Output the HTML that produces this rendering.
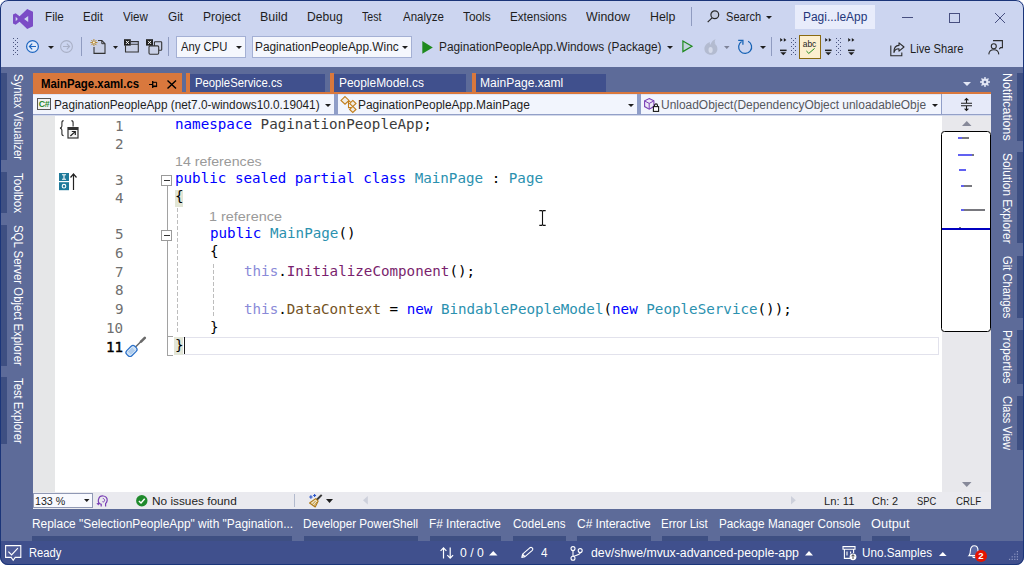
<!DOCTYPE html>
<html lang="en">
<head>
<meta charset="utf-8">
<title>MainPage.xaml.cs - PaginationPeopleApp - Microsoft Visual Studio</title>
<style>
*{box-sizing:border-box;margin:0;padding:0}
html,body{width:1024px;height:565px;overflow:hidden;background:#fff}
body{position:relative;font-family:"Liberation Sans",sans-serif;font-size:12px;color:#1e1e1e}
#win{position:absolute;left:0;top:0;width:1024px;height:565px;background:#5d6b99;border-radius:8px;overflow:hidden}
#win:after{content:"";position:absolute;left:0;top:0;right:0;bottom:0;border:1px solid #1b3579;border-radius:8px;pointer-events:none}
.a{position:absolute}
.t{position:absolute;white-space:nowrap;line-height:16px;height:16px;transform-origin:0 50%}
.vt{position:absolute;white-space:nowrap;line-height:16px;height:16px;transform-origin:0 0}
.c{position:absolute;white-space:pre;font-family:"DejaVu Sans Mono","Liberation Mono",monospace;line-height:18px;height:18px;color:#000;transform-origin:0 50%}
.kw{color:#0000ff}.ty{color:#2b91af}.th{color:#8a8ad8}.mt{color:#74531f}.pr{color:#7a1f6e}.ns{color:#3c3c3c}
svg{position:absolute;overflow:visible}
</style>
</head>
<body>
<div id="win">
<!-- title / menu bar / toolbar -->
<div class="a" style="left:0px;top:0px;width:1024px;height:67px;background:#ccd5f0;"></div>
<svg style="left:13px;top:9px" width="20" height="20" viewBox="0 0 20 20"><path fill="#7b4cc6" fill-rule="evenodd" d="M14.2 0 L20 2.8 V17.2 L14.2 20 L6.6 12.7 L2.6 15.7 L0 14.4 V5.6 L2.6 4.3 L6.6 7.3 Z M2.7 7.7 V12.3 L4.9 10 Z M15.2 6.9 L11.1 10 L15.2 13.1 Z"/></svg>
<div class="t" style="left:44.57px;top:9.00px;font-size:12px;color:#1e1e1e;transform:scaleX(0.9722);">File</div>
<div class="t" style="left:82.58px;top:9.00px;font-size:12px;color:#1e1e1e;transform:scaleX(0.9596);">Edit</div>
<div class="t" style="left:123.00px;top:9.00px;font-size:12px;color:#1e1e1e;transform:scaleX(0.9645);">View</div>
<div class="t" style="left:167.91px;top:9.00px;font-size:12px;color:#1e1e1e;transform:scaleX(0.9824);">Git</div>
<div class="t" style="left:202.54px;top:9.00px;font-size:12px;color:#1e1e1e;transform:scaleX(1.0039);">Project</div>
<div class="t" style="left:259.50px;top:9.00px;font-size:12px;color:#1e1e1e;transform:scaleX(1.0367);">Build</div>
<div class="t" style="left:306.53px;top:9.00px;font-size:12px;color:#1e1e1e;transform:scaleX(1.0083);">Debug</div>
<div class="t" style="left:362.29px;top:9.00px;font-size:12px;color:#1e1e1e;transform:scaleX(0.8837);">Test</div>
<div class="t" style="left:402.50px;top:9.00px;font-size:12px;color:#1e1e1e;transform:scaleX(0.9588);">Analyze</div>
<div class="t" style="left:462.76px;top:9.00px;font-size:12px;color:#1e1e1e;transform:scaleX(0.9868);">Tools</div>
<div class="t" style="left:509.57px;top:9.00px;font-size:12px;color:#1e1e1e;transform:scaleX(0.9676);">Extensions</div>
<div class="t" style="left:586.00px;top:9.00px;font-size:12px;color:#1e1e1e;transform:scaleX(1.0300);">Window</div>
<div class="t" style="left:649.51px;top:9.00px;font-size:12px;color:#1e1e1e;transform:scaleX(1.0309);">Help</div>
<div class="a" style="left:691px;top:7px;width:1px;height:19px;background:#8f9bc0;"></div>
<svg style="left:707px;top:10px" width="13" height="13" viewBox="0 0 13 13"><circle cx="7.8" cy="4.8" r="3.9" fill="#c3cade" stroke="#2a2a2a" stroke-width="1.2"/><path d="M5 7.8 L0.7 12.2" stroke="#2a2a2a" stroke-width="1.2" fill="none"/></svg>
<div class="t" style="left:725.56px;top:9.00px;font-size:12px;color:#1e1e1e;transform:scaleX(0.9229);">Search</div>
<svg style="left:766px;top:16px" width="6" height="3" viewBox="0 0 6 3"><path d="M0 0H6L3 3Z" fill="#1e1e1e"/></svg>
<div class="a" style="left:795px;top:5px;width:80px;height:24px;background:#e8ecfb;"></div>
<div class="t" style="left:802.85px;top:9.00px;font-size:12px;color:#23367a;transform:scaleX(0.9943);">Pagi...leApp</div>
<div class="a" style="left:902px;top:17px;width:11px;height:1px;background:#474f80;"></div>
<div class="a" style="left:949px;top:13px;width:11px;height:10px;border:1px solid #474f80"></div>
<svg style="left:995px;top:13px" width="10" height="10" viewBox="0 0 10 10"><path d="M0 0L10 10M10 0L0 10" stroke="#474f80" stroke-width="1" fill="none"/></svg>
<!-- toolbar -->
<svg style="left:13px;top:38px" width="5" height="17" viewBox="0 0 5 17"><rect x="0" y="0" width="1" height="1" fill="#4a547e"/><rect x="4" y="0" width="1" height="1" fill="#4a547e"/><rect x="2" y="2" width="1" height="1" fill="#4a547e"/><rect x="0" y="4" width="1" height="1" fill="#4a547e"/><rect x="4" y="4" width="1" height="1" fill="#4a547e"/><rect x="2" y="6" width="1" height="1" fill="#4a547e"/><rect x="0" y="8" width="1" height="1" fill="#4a547e"/><rect x="4" y="8" width="1" height="1" fill="#4a547e"/><rect x="2" y="10" width="1" height="1" fill="#4a547e"/><rect x="0" y="12" width="1" height="1" fill="#4a547e"/><rect x="4" y="12" width="1" height="1" fill="#4a547e"/><rect x="2" y="14" width="1" height="1" fill="#4a547e"/><rect x="0" y="16" width="1" height="1" fill="#4a547e"/><rect x="4" y="16" width="1" height="1" fill="#4a547e"/></svg>
<svg style="left:26px;top:40px" width="13" height="13" viewBox="0 0 13 13"><circle cx="6.5" cy="6.5" r="5.9" fill="#dfe9fb" stroke="#1f66c0" stroke-width="1.2"/><path d="M10 6.5H3.6M6.2 3.7L3.4 6.5L6.2 9.3" stroke="#1f66c0" stroke-width="1.2" fill="none"/></svg>
<svg style="left:47.5px;top:46px" width="6" height="3" viewBox="0 0 6 3"><path d="M0 0H6L3.0 3Z" fill="#1e1e1e"/></svg>
<svg style="left:60px;top:40px" width="13" height="13" viewBox="0 0 13 13"><circle cx="6.5" cy="6.5" r="5.9" fill="none" stroke="#a9b0c6" stroke-width="1.1"/><path d="M3 6.5H9.4M6.8 3.7L9.6 6.5L6.8 9.3" stroke="#a9b0c6" stroke-width="1.1" fill="none"/></svg>
<div class="a" style="left:81px;top:37px;width:1px;height:19px;background:#8f9bc0;"></div>
<svg style="left:89.5px;top:39px" width="16" height="15" viewBox="0 0 16 15"><path d="M7.6 1.5H11.8L15 4.7V14.4H4V7.8Z" fill="#c9d0e6"/><path d="M8 1.5H11.8L15 4.7V14.4H4V8" fill="none" stroke="#333" stroke-width="1.1"/><path d="M11.8 1.5V4.7H15" fill="none" stroke="#333" stroke-width="1"/><path d="M3.9 0.1V7.1M0.4 3.6H7.4M1.4 1.1L6.4 6.1M6.4 1.1L1.4 6.1" stroke="#b07a10" stroke-width="0.9"/><circle cx="3.9" cy="3.6" r="1" fill="#fff6d8"/></svg>
<svg style="left:112.5px;top:46px" width="5" height="3" viewBox="0 0 5 3"><path d="M0 0H5L2.5 3Z" fill="#1e1e1e"/></svg>
<svg style="left:124px;top:39px" width="15" height="14" viewBox="0 0 15 14"><rect x="1.5" y="5.3" width="12.8" height="7.7" fill="#c9d0e6"/><path d="M1.5 6.6V13H14.3V2.6H6.8M6.8 5.3H14.3" fill="none" stroke="#333" stroke-width="1.1"/><rect x="0" y="0.2" width="6.8" height="6.4" fill="#222"/><path d="M2 1.9L4.9 4.9M4.9 1.9L2 4.9" stroke="#fff" stroke-width="1"/></svg>
<svg style="left:146px;top:39px" width="16" height="16" viewBox="0 0 16 16"><rect x="8.4" y="2.8" width="7.3" height="8.4" rx="0.8" fill="#c9d0e6" stroke="#333" stroke-width="1.1"/><rect x="3" y="6.9" width="9.7" height="8.4" rx="1.2" fill="#c9d0e6" stroke="#333" stroke-width="1.1"/><rect x="0" y="0.2" width="7" height="6.4" fill="#222"/><path d="M2.1 1.9L5 4.9M5 1.9L2.1 4.9" stroke="#fff" stroke-width="1"/></svg>
<div class="a" style="left:168px;top:37px;width:1px;height:19px;background:#8f9bc0;"></div>
<div class="a" style="left:176px;top:36px;width:70px;height:22px;background:#f5f7fd;border:1px solid #a4b0d4"></div>
<div class="t" style="left:180.50px;top:39.00px;font-size:12.5px;color:#1e1e1e;transform:scaleX(0.9010);">Any CPU</div>
<svg style="left:236px;top:46px" width="6" height="3" viewBox="0 0 6 3"><path d="M0 0H6L3.0 3Z" fill="#1e1e1e"/></svg>
<div class="a" style="left:252px;top:36px;width:160px;height:22px;background:#f5f7fd;border:1px solid #a4b0d4"></div>
<div class="t" style="left:254.55px;top:39.00px;font-size:12.5px;color:#1e1e1e;transform:scaleX(0.9484);">PaginationPeopleApp.Winc</div>
<svg style="left:402px;top:46px" width="6" height="3" viewBox="0 0 6 3"><path d="M0 0H6L3.0 3Z" fill="#1e1e1e"/></svg>
<svg style="left:421.5px;top:40.5px" width="11" height="13" viewBox="0 0 11 13"><path d="M0.3 0L10.8 6.4L0.3 12.8Z" fill="#1f8a1f"/></svg>
<div class="t" style="left:438.55px;top:39.00px;font-size:12.5px;color:#1e1e1e;transform:scaleX(0.9475);">PaginationPeopleApp.Windows (Package)</div>
<svg style="left:667px;top:46px" width="6" height="3" viewBox="0 0 6 3"><path d="M0 0H6L3.0 3Z" fill="#1e1e1e"/></svg>
<svg style="left:681.6px;top:40.1px" width="11" height="13" viewBox="0 0 11 13"><path d="M0.9 1L10 6.3L0.9 11.6Z" fill="#c3d3de" stroke="#1f8a1f" stroke-width="1.2"/></svg>
<svg style="left:703.6px;top:38.6px" width="14" height="16" viewBox="0 0 14 16"><path d="M11.6 0.3C10.4 2.2 10.6 3.4 11.6 4.6C11.2 4.4 10.8 4.4 10.4 4.6C12.6 6 13.6 8.2 13.4 10.4C13 13.8 10.4 15.8 7 15.8C3.2 15.8 0.4 13.4 0.4 9.8C0.4 6.6 3 3.8 6 3C5.6 4.2 5.8 5 6.4 5.8C7.2 3.2 9 1.2 11.6 0.3Z" fill="#b3bbd0"/><ellipse cx="6.6" cy="11" rx="2.1" ry="3" fill="#d4daea"/></svg>
<svg style="left:724.2px;top:46px" width="5.6" height="3.1" viewBox="0 0 5.6 3.1"><path d="M0 0H5.6L2.8 3.1Z" fill="#7d8297"/></svg>
<svg style="left:737px;top:39px" width="16" height="16" viewBox="0 0 16 16"><path d="M11.15 2.2A6.5 6.5 0 1 1 4.6 2.5" fill="none" stroke="#1763b5" stroke-width="1.25"/><path d="M1.2 1.3H5.9V5.8" fill="none" stroke="#1763b5" stroke-width="1.3"/></svg>
<svg style="left:759.5px;top:46px" width="6" height="3" viewBox="0 0 6 3"><path d="M0 0H6L3.0 3Z" fill="#1e1e1e"/></svg>
<div class="a" style="left:771px;top:37px;width:1px;height:19px;background:#8f9bc0;"></div>
<svg style="left:779.8px;top:38.3px" width="7" height="18" viewBox="0 0 7 18"><path d="M0.2 0L2.8 1.9L0.2 3.8Z M3.8 0L6.4 1.9L3.8 3.8Z" fill="#1e1e1e"/><rect x="0" y="11.6" width="6.6" height="1.5" fill="#1e1e1e"/><path d="M0.3 14.3H6.3L3.3 17.3Z" fill="#1e1e1e"/></svg>
<svg style="left:790.5px;top:38px" width="5" height="17" viewBox="0 0 5 17"><rect x="0" y="0" width="1" height="1" fill="#4a547e"/><rect x="4" y="0" width="1" height="1" fill="#4a547e"/><rect x="2" y="2" width="1" height="1" fill="#4a547e"/><rect x="0" y="4" width="1" height="1" fill="#4a547e"/><rect x="4" y="4" width="1" height="1" fill="#4a547e"/><rect x="2" y="6" width="1" height="1" fill="#4a547e"/><rect x="0" y="8" width="1" height="1" fill="#4a547e"/><rect x="4" y="8" width="1" height="1" fill="#4a547e"/><rect x="2" y="10" width="1" height="1" fill="#4a547e"/><rect x="0" y="12" width="1" height="1" fill="#4a547e"/><rect x="4" y="12" width="1" height="1" fill="#4a547e"/><rect x="2" y="14" width="1" height="1" fill="#4a547e"/><rect x="0" y="16" width="1" height="1" fill="#4a547e"/><rect x="4" y="16" width="1" height="1" fill="#4a547e"/></svg>
<div class="a" style="left:799px;top:35px;width:22px;height:24px;background:#fcefcf;border:1.2px solid #8a6a12"></div>
<div class="t" style="left:802.8px;top:39px;font-size:8.4px;color:#1a1a1a;letter-spacing:0;line-height:10px;height:10px">abc</div>
<svg style="left:806px;top:48.3px" width="9" height="6" viewBox="0 0 9 6"><path d="M0.4 3L2.8 5.4L8.6 0.4" fill="none" stroke="#1f8a1f" stroke-width="1"/></svg>
<svg style="left:825px;top:38.3px" width="7" height="18" viewBox="0 0 7 18"><path d="M0.2 0L2.8 1.9L0.2 3.8Z M3.8 0L6.4 1.9L3.8 3.8Z" fill="#1e1e1e"/><rect x="0" y="11.6" width="6.6" height="1.5" fill="#1e1e1e"/><path d="M0.3 14.3H6.3L3.3 17.3Z" fill="#1e1e1e"/></svg>
<svg style="left:836px;top:38px" width="5" height="17" viewBox="0 0 5 17"><rect x="0" y="0" width="1" height="1" fill="#4a547e"/><rect x="4" y="0" width="1" height="1" fill="#4a547e"/><rect x="2" y="2" width="1" height="1" fill="#4a547e"/><rect x="0" y="4" width="1" height="1" fill="#4a547e"/><rect x="4" y="4" width="1" height="1" fill="#4a547e"/><rect x="2" y="6" width="1" height="1" fill="#4a547e"/><rect x="0" y="8" width="1" height="1" fill="#4a547e"/><rect x="4" y="8" width="1" height="1" fill="#4a547e"/><rect x="2" y="10" width="1" height="1" fill="#4a547e"/><rect x="0" y="12" width="1" height="1" fill="#4a547e"/><rect x="4" y="12" width="1" height="1" fill="#4a547e"/><rect x="2" y="14" width="1" height="1" fill="#4a547e"/><rect x="0" y="16" width="1" height="1" fill="#4a547e"/><rect x="4" y="16" width="1" height="1" fill="#4a547e"/></svg>
<svg style="left:847.5px;top:38.3px" width="7" height="18" viewBox="0 0 7 18"><path d="M0.2 0L2.8 1.9L0.2 3.8Z M3.8 0L6.4 1.9L3.8 3.8Z" fill="#1e1e1e"/><rect x="0" y="11.6" width="6.6" height="1.5" fill="#1e1e1e"/><path d="M0.3 14.3H6.3L3.3 17.3Z" fill="#1e1e1e"/></svg>
<svg style="left:890px;top:42px" width="15" height="15" viewBox="0 0 15 15"><path d="M0.8 3.4V13.8H11.8V10.6" fill="none" stroke="#2b2b2b" stroke-width="1.1"/><path d="M9 0.8L14 5L9 9.2V6.7C6.2 6.6 4.6 8 3.9 10.5C3.8 6.2 5.8 3.6 9 3.4Z" fill="none" stroke="#2b2b2b" stroke-width="1.1" stroke-linejoin="round"/></svg>
<div class="t" style="left:910.11px;top:41.00px;font-size:12.5px;color:#1e1e1e;transform:scaleX(0.8927);">Live Share</div>
<svg style="left:988px;top:40px" width="15" height="15" viewBox="0 0 15 15"><path d="M5 0.6H14.4V7.6H12.6L11.2 9.2" fill="none" stroke="#2b2b2b" stroke-width="1.1"/><circle cx="5.8" cy="6.2" r="2.5" fill="none" stroke="#2b2b2b" stroke-width="1.1"/><path d="M0.8 14.4C1 11.4 3 9.8 5.8 9.8C8.6 9.8 10.6 11.4 10.8 14.4" fill="none" stroke="#2b2b2b" stroke-width="1.1"/></svg>
<!-- document tabs -->
<div class="a" style="left:33px;top:73px;width:149px;height:21px;background:#d9783d;"></div>
<div class="a" style="left:33px;top:92px;width:958px;height:2px;background:#d9783d;"></div>
<div class="t" style="left:41.32px;top:76.00px;font-size:12.5px;color:#000;font-weight:bold;transform:scaleX(0.9108);">MainPage.xaml.cs</div>
<svg style="left:149px;top:81px" width="9" height="7" viewBox="0 0 9 7"><path d="M0 3.5H3.6" stroke="#000" stroke-width="1.1"/><path d="M3.7 0V7" stroke="#000" stroke-width="1.3"/><path d="M3.7 1.3H7.6V5.2" fill="none" stroke="#000" stroke-width="1"/><rect x="3.7" y="4.5" width="4.4" height="1.6" fill="#000"/></svg>
<svg style="left:167px;top:79.5px" width="9.5" height="9" viewBox="0 0 9.5 9"><path d="M0.5 0.5L9 8.5M9 0.5L0.5 8.5" stroke="#000" stroke-width="1.4" fill="none"/></svg>
<div class="a" style="left:186px;top:73px;width:4px;height:19px;background:#d9783d;"></div>
<div class="a" style="left:190px;top:74px;width:134.5px;height:18px;background:#40508d;"></div>
<div class="t" style="left:194.60px;top:75.00px;font-size:12.5px;color:#fff;transform:scaleX(0.9029);">PeopleService.cs</div>
<div class="a" style="left:330px;top:73px;width:4px;height:19px;background:#d9783d;"></div>
<div class="a" style="left:334px;top:74px;width:132px;height:18px;background:#40508d;"></div>
<div class="t" style="left:338.55px;top:75.00px;font-size:12.5px;color:#fff;transform:scaleX(0.9543);">PeopleModel.cs</div>
<div class="a" style="left:471.5px;top:73px;width:4px;height:19px;background:#d9783d;"></div>
<div class="a" style="left:475.5px;top:74px;width:130.0px;height:18px;background:#40508d;"></div>
<div class="t" style="left:479.53px;top:75.00px;font-size:12.5px;color:#fff;transform:scaleX(0.9659);">MainPage.xaml</div>
<svg style="left:963px;top:82px" width="8" height="4" viewBox="0 0 8 4"><path d="M0 0H8L4 4Z" fill="#e3e7f5"/></svg>
<svg style="left:980px;top:77px" width="10" height="10" viewBox="0 0 10 10"><circle cx="5" cy="5" r="2.6" fill="none" stroke="#e3e7f5" stroke-width="1.7"/><path d="M5 0V10M0 5H10M1.5 1.5L8.5 8.5M8.5 1.5L1.5 8.5" stroke="#e3e7f5" stroke-width="1.4"/><circle cx="5" cy="5" r="1.3" fill="#5d6b99"/></svg>
<!-- navigation bar -->
<div class="a" style="left:33px;top:94px;width:958px;height:20px;background:#dfe5f6;"></div>
<div class="a" style="left:33px;top:114px;width:958px;height:1px;background:#93a0c8;"></div>
<div class="a" style="left:33px;top:115px;width:958px;height:1px;background:#d3d9ea;"></div>
<div class="a" style="left:334px;top:94px;width:3.5px;height:21px;background:#909ec8;"></div>
<div class="a" style="left:637px;top:94px;width:3.5px;height:21px;background:#909ec8;"></div>
<div class="a" style="left:940.5px;top:94px;width:1.5px;height:21px;background:#909ec8;"></div>
<div class="a" style="left:33px;top:94.6px;width:301px;height:19.6px;background:#f2f5fd;"></div>
<div class="a" style="left:337.5px;top:94.6px;width:299.5px;height:19.6px;background:#f2f5fd;"></div>
<div class="a" style="left:640.5px;top:94.6px;width:300px;height:19.6px;background:#f2f5fd;"></div>
<div class="a" style="left:942px;top:94px;width:49px;height:20px;background:#e6eaf9;"></div>
<div class="a" style="left:37px;top:98px;width:14px;height:12px;border:1px solid #555;background:#f1f1f1"></div>
<div class="t" style="left:38.8px;top:96px;font-size:8.8px;font-weight:bold;color:#2a8a2a;letter-spacing:-0.4px">C#</div>
<div class="t" style="left:53.56px;top:97.00px;font-size:12.5px;color:#1e1e1e;transform:scaleX(0.9437);">PaginationPeopleApp (net7.0-windows10.0.19041)</div>
<svg style="left:325px;top:104px" width="6" height="3" viewBox="0 0 6 3"><path d="M0 0H6L3.0 3Z" fill="#1e1e1e"/></svg>
<svg style="left:340px;top:96px" width="17" height="17" viewBox="0 0 17 17"><path d="M5 0.6L9 4.4L5 8.2L1 4.4Z" fill="#f0ece4" stroke="#c27d1a" stroke-width="1.1"/><path d="M12.8 4.4L16 7.5L12.8 10.6L9.6 7.5Z" fill="#f0ece4" stroke="#c27d1a" stroke-width="1.1"/><path d="M12.8 10.4L16 13.5L12.8 16.4L9.6 13.5Z" fill="#f0ece4" stroke="#c27d1a" stroke-width="1.1"/><path d="M8 5.5H10.5M8.5 5.5V11.6H11" fill="none" stroke="#c27d1a" stroke-width="1.1"/></svg>
<div class="t" style="left:357.65px;top:97.00px;font-size:12.5px;color:#1e1e1e;transform:scaleX(0.9546);">PaginationPeopleApp.MainPage</div>
<svg style="left:628px;top:104px" width="6" height="3" viewBox="0 0 6 3"><path d="M0 0H6L3.0 3Z" fill="#1e1e1e"/></svg>
<svg style="left:644px;top:97.6px" width="16" height="15" viewBox="0 0 16 15"><path d="M5.2 0.6L9.9 2.8V8.6L5.2 11.2L0.6 8.6V2.8Z" fill="#ece6f7" stroke="#7a3fb5" stroke-width="1.1"/><path d="M0.8 3L5.2 5.4L9.7 3M5.2 5.4V11" fill="none" stroke="#7a3fb5" stroke-width="1"/><rect x="9.4" y="8.6" width="5.2" height="4.8" fill="#fff" stroke="#1a1a1a" stroke-width="1.1"/><path d="M10.5 8.6V7.4A1.5 1.5 0 0 1 13.5 7.4V8.6" fill="none" stroke="#1a1a1a" stroke-width="1.1"/></svg>
<div class="t" style="left:660.96px;top:97.00px;font-size:12.5px;color:#55575e;transform:scaleX(0.9559);">UnloadObject(DependencyObject unloadableObje</div>
<svg style="left:932px;top:104px" width="6" height="3" viewBox="0 0 6 3"><path d="M0 0H6L3.0 3Z" fill="#1e1e1e"/></svg>
<svg style="left:961px;top:98px" width="11" height="13" viewBox="0 0 11 13"><path d="M0 5.3H11M0 7.7H11" stroke="#1e1e1e" stroke-width="1.1"/><path d="M5.5 0.5V5M5.5 8V12.5M3.6 2.4L5.5 0.5L7.4 2.4M3.6 10.6L5.5 12.5L7.4 10.6" stroke="#1e1e1e" stroke-width="1.1" fill="none"/></svg>
<!-- editor -->
<div class="a" style="left:33px;top:116px;width:909px;height:376px;background:#fff;"></div>
<div class="a" style="left:33px;top:116px;width:22.3px;height:376px;background:#e6e7e8;"></div>
<div class="a" style="left:941.5px;top:116px;width:49.5px;height:376px;background:#e8e8ec;"></div>
<svg style="left:962px;top:121px" width="9.5" height="5" viewBox="0 0 9.5 5"><path d="M0 5H9.5L4.75 0Z" fill="#868999"/></svg>
<svg style="left:962px;top:482px" width="9.5" height="5" viewBox="0 0 9.5 5"><path d="M0 0H9.5L4.75 5Z" fill="#868999"/></svg>
<div class="a" style="left:940.5px;top:130.5px;width:50.5px;height:201.5px;background:#fff;border:1.2px solid #000;border-radius:3.5px"></div>
<div class="a" style="left:958px;top:137px;width:3.5px;height:2.4px;background:rgba(30,30,235,0.7);"></div>
<div class="a" style="left:961.5px;top:137px;width:7.5px;height:2.4px;background:rgba(30,30,40,0.6);"></div>
<div class="a" style="left:958px;top:153.6px;width:13.5px;height:2.4px;background:rgba(30,30,235,0.7);"></div>
<div class="a" style="left:971.5px;top:153.6px;width:2.1px;height:2.4px;background:rgba(30,30,40,0.6);"></div>
<div class="a" style="left:959px;top:168.8px;width:6.8px;height:2.4px;background:rgba(30,30,235,0.7);"></div>
<div class="a" style="left:961px;top:184.6px;width:2.5px;height:2.4px;background:rgba(30,30,235,0.7);"></div>
<div class="a" style="left:963.5px;top:184.6px;width:8.0px;height:2.4px;background:rgba(30,30,40,0.6);"></div>
<div class="a" style="left:961px;top:209px;width:3px;height:2.4px;background:rgba(30,30,235,0.7);"></div>
<div class="a" style="left:964px;top:209px;width:20.7px;height:2.4px;background:rgba(30,30,40,0.6);"></div>
<div class="a" style="left:959px;top:226.5px;width:1.5px;height:1.2px;background:#777;"></div>
<div class="a" style="left:941.5px;top:228px;width:48.5px;height:2px;background:#0000c0;"></div>
<div class="a" style="left:174.2px;top:337px;width:764.5px;height:17.6px;border:1.4px solid #e2e2ec"></div>
<div class="a" style="left:175px;top:189.5px;width:7.8px;height:17px;background:#e2e6d6;"></div>
<div class="a" style="left:173.8px;top:336.6px;width:9px;height:18px;background:#e3e6d8;"></div>
<div class="a" style="left:166.6px;top:186px;width:1.2px;height:169.5px;background:#a2a2a2;"></div>
<div class="a" style="left:166.6px;top:354.8px;width:6.2px;height:1.2px;background:#a2a2a2;"></div>
<div class="a" style="left:166.6px;top:335.6px;width:6.2px;height:1.2px;background:#a2a2a2;"></div>
<div class="a" style="left:161.2px;top:174.5px;width:11.2px;height:11px;background:#fff;border:1px solid #9a9a9a"></div>
<div class="a" style="left:163.8px;top:179.5px;width:6px;height:1px;background:#333;"></div>
<div class="a" style="left:161.2px;top:229.5px;width:11.2px;height:11px;background:#fff;border:1px solid #9a9a9a"></div>
<div class="a" style="left:163.8px;top:234.5px;width:6px;height:1px;background:#333;"></div>
<div class="a" style="left:177.4px;top:208px;width:1px;height:126px;background:repeating-linear-gradient(#bdbdbd 0 4px,transparent 4px 6px)"></div>
<div class="a" style="left:213px;top:264px;width:1px;height:54px;background:repeating-linear-gradient(#bdbdbd 0 4px,transparent 4px 6px)"></div>
<div class="a" style="left:183.5px;top:336.8px;width:1.5px;height:17.4px;background:#1a1a1a;"></div>
<svg style="left:539px;top:210px" width="7" height="16" viewBox="0 0 7 16"><path d="M0.3 0.6H2.6L3.5 1.4L4.4 0.6H6.7M3.5 1.2V14.8M0.3 15.4H2.6L3.5 14.6L4.4 15.4H6.7" fill="none" stroke="#111" stroke-width="1.1"/></svg>
<div class="c" style="left:175.30px;top:114.60px;font-size:14.17px;transform:scaleX(1.0041)"><span class="kw">namespace</span> <span class="ns">PaginationPeopleApp</span>;</div>
<div class="c" style="left:175.30px;top:168.60px;font-size:14.17px;transform:scaleX(1.0041)"><span class="kw">public sealed partial class</span> <span class="ty">MainPage</span> : <span class="ty">Page</span></div>
<div class="c" style="left:175.30px;top:186.70px;font-size:14.17px;transform:scaleX(1.0041)">{</div>
<div class="c" style="left:209.56px;top:224.30px;font-size:14.17px;transform:scaleX(1.0041)"><span class="kw">public</span> <span class="ty">MainPage</span>()</div>
<div class="c" style="left:209.56px;top:242.30px;font-size:14.17px;transform:scaleX(1.0041)">{</div>
<div class="c" style="left:243.82px;top:262.10px;font-size:14.17px;transform:scaleX(1.0041)"><span class="th">this</span>.<span class="pr">InitializeComponent</span>();</div>
<div class="c" style="left:243.82px;top:299.70px;font-size:14.17px;transform:scaleX(1.0041)"><span class="th">this</span>.<span class="mt">DataContext</span> = <span class="kw">new</span> <span class="ty">BindablePeopleModel</span>(<span class="kw">new</span> <span class="ty">PeopleService</span>());</div>
<div class="c" style="left:209.56px;top:317.50px;font-size:14.17px;transform:scaleX(1.0041)">}</div>
<div class="c" style="left:175.30px;top:336.30px;font-size:14.17px;transform:scaleX(1.0041)">}</div>
<div class="c" style="left:114.73px;top:117.83px;font-size:13.2px;color:#6f6f6f;transform:scaleX(1.0778)">1</div>
<div class="c" style="left:114.73px;top:135.83px;font-size:13.2px;color:#6f6f6f;transform:scaleX(1.0778)">2</div>
<div class="c" style="left:114.73px;top:171.63px;font-size:13.2px;color:#6f6f6f;transform:scaleX(1.0778)">3</div>
<div class="c" style="left:114.73px;top:190.43px;font-size:13.2px;color:#6f6f6f;transform:scaleX(1.0778)">4</div>
<div class="c" style="left:114.73px;top:226.23px;font-size:13.2px;color:#6f6f6f;transform:scaleX(1.0778)">5</div>
<div class="c" style="left:114.73px;top:244.83px;font-size:13.2px;color:#6f6f6f;transform:scaleX(1.0778)">6</div>
<div class="c" style="left:114.73px;top:263.53px;font-size:13.2px;color:#6f6f6f;transform:scaleX(1.0778)">7</div>
<div class="c" style="left:114.73px;top:282.33px;font-size:13.2px;color:#6f6f6f;transform:scaleX(1.0778)">8</div>
<div class="c" style="left:114.73px;top:300.93px;font-size:13.2px;color:#6f6f6f;transform:scaleX(1.0778)">9</div>
<div class="c" style="left:106.17px;top:319.63px;font-size:13.2px;color:#6f6f6f;transform:scaleX(1.0778)">10</div>
<div class="c" style="left:106.17px;top:338.73px;font-size:13.2px;color:#000;-webkit-text-stroke:0.35px #000;transform:scaleX(1.0778)">11</div>
<div class="t" style="left:174.81px;top:153.50px;font-size:13.2px;color:#9a9a9a;transform:scaleX(1.0740);">14 references</div>
<div class="t" style="left:208.59px;top:208.50px;font-size:13.2px;color:#9a9a9a;transform:scaleX(1.0927);">1 reference</div>
<svg style="left:59px;top:120px" width="20" height="19" viewBox="0 0 20 19"><path d="M4.6 0.6C3.1 0.6 2.9 1.5 2.9 2.8V6C2.9 7.2 2.3 7.9 1 8.1C2.3 8.3 2.9 9 2.9 10.2V13.4C2.9 14.7 3.1 15.6 4.6 15.6" fill="none" stroke="#333" stroke-width="1.15"/><path d="M12.4 0.6C13.9 0.6 14.1 1.5 14.1 2.8V6.6" fill="none" stroke="#333" stroke-width="1.15"/><rect x="9" y="7.6" width="10" height="10.4" fill="#f3f3f3" stroke="#333" stroke-width="1.2"/><path d="M9 9H19" stroke="#333" stroke-width="1.8"/><path d="M11.4 16L16.2 11.6M12.8 11.5H16.3V15" fill="none" stroke="#222" stroke-width="1.2"/></svg>
<svg style="left:59px;top:173px" width="19" height="18" viewBox="0 0 19 18"><rect x="0" y="0" width="10" height="8" fill="#1f7a9a"/><rect x="0" y="9.2" width="10" height="8" fill="#1f7a9a"/><path d="M3 1.8H7M5 1.8V6.2M3 6.2H7" stroke="#fff" stroke-width="1.1" fill="none"/><circle cx="5" cy="13.2" r="1.8" fill="none" stroke="#fff" stroke-width="1.1"/><path d="M14.5 17V1M11.5 4.5L14.5 1L17.5 4.5" fill="none" stroke="#222" stroke-width="1.2"/></svg>
<svg style="left:124px;top:337px" width="23" height="21" viewBox="0 0 23 21"><path d="M11 10.5L18 3.5" stroke="#666" stroke-width="1.4"/><path d="M17 4.6L20.8 0.8" stroke="#6a6a6a" stroke-width="2.6" stroke-linecap="round"/><g transform="rotate(-45 7.5 14)"><rect x="1.8" y="10.4" width="11.4" height="7.2" rx="2.6" fill="#d6e6f6" stroke="#2b70c9" stroke-width="1.2"/><path d="M4.4 12.6H10.6M4.4 14H10.6M4.4 15.4H10.6" stroke="#6fa0dc" stroke-width="0.7"/></g></svg>
<!-- editor bottom bar -->
<div class="a" style="left:33px;top:492px;width:958px;height:16.8px;background:#eaeaef;"></div>
<div class="a" style="left:33.4px;top:492.6px;width:59.6px;height:15.8px;background:#f8f9fe;border:1px solid #8f98b4"></div>
<div class="t" style="left:35.05px;top:493.00px;font-size:11.6px;color:#1e1e1e;transform:scaleX(0.9187);">133 %</div>
<svg style="left:84px;top:499px" width="5.5" height="3" viewBox="0 0 5.5 3"><path d="M0 0H5.5L2.75 3Z" fill="#1e1e1e"/></svg>
<svg style="left:96px;top:494.5px" width="12" height="12" viewBox="0 0 12 12"><path d="M5.2 11.5V9.3C3 8.6 2 6.8 2.4 4.8C2.9 2.4 4.8 0.8 7.2 1C9.8 1.2 11.4 3.2 11.2 5.4C11 7 10.4 7.8 9.6 8.6V11.5" fill="none" stroke="#7a3fb5" stroke-width="1.2"/><path d="M6.8 3.4C8.4 3.6 9 5 8.4 6.2C8 7 7 7.2 6.4 6.6" fill="none" stroke="#7a3fb5" stroke-width="1"/><path d="M0.4 8.6L3.4 7.4L2.6 10.4Z" fill="#7a3fb5"/></svg>
<svg style="left:136px;top:494.8px" width="11.6" height="11.6" viewBox="0 0 12 12"><circle cx="6" cy="6" r="5.9" fill="#1f8a2c"/><path d="M3 6.2L5.2 8.3L9 3.9" fill="none" stroke="#fff" stroke-width="1.5"/></svg>
<div class="t" style="left:151.55px;top:493.00px;font-size:11.8px;color:#1e1e1e;transform:scaleX(1.0018);">No issues found</div>
<div class="a" style="left:294px;top:494px;width:1px;height:13px;background:#b2bacd;"></div>
<svg style="left:309px;top:493.5px" width="14" height="14" viewBox="0 0 14 14"><path d="M12.7 0.9L7.6 6" stroke="#3a3a3a" stroke-width="2"/><path d="M6.7 4.6L9.2 7.1L6.2 13L0.6 9Z" fill="#efe4c4" stroke="#b07a18" stroke-width="1.1" stroke-linejoin="round"/><path d="M6.6 7L3.2 10.6M8 8L5 11.8" stroke="#b07a18" stroke-width="0.8"/><path d="M1.9 1.3V4.7M0.2 3H3.6M5.6 0V3M4.1 1.5H7.1" stroke="#2b55c8" stroke-width="1.1"/></svg>
<svg style="left:326px;top:499px" width="7" height="4" viewBox="0 0 7 4"><path d="M0 0H7L3.5 4Z" fill="#1e1e1e"/></svg>
<svg style="left:363.4px;top:496.3px" width="4.8" height="8.4" viewBox="0 0 4.8 8.4"><path d="M4.8 0V8.4L0 4.2Z" fill="#cdd0db"/></svg>
<svg style="left:791.2px;top:496.3px" width="4.8" height="8.4" viewBox="0 0 4.8 8.4"><path d="M0 0V8.4L4.8 4.2Z" fill="#cdd0db"/></svg>
<div class="t" style="left:824.10px;top:493.00px;font-size:11.6px;color:#1e1e1e;transform:scaleX(0.9690);">Ln: 11</div>
<div class="t" style="left:872.45px;top:493.00px;font-size:11.6px;color:#1e1e1e;transform:scaleX(0.9411);">Ch: 2</div>
<div class="t" style="left:917.13px;top:493.00px;font-size:11.6px;color:#1e1e1e;transform:scaleX(0.8055);">SPC</div>
<div class="t" style="left:956.12px;top:493.00px;font-size:11.6px;color:#1e1e1e;transform:scaleX(0.8314);">CRLF</div>
<!-- tool window tabs -->
<div class="t" style="left:31.65px;top:516.00px;font-size:12.5px;color:#fff;transform:scaleX(0.9531);">Replace &quot;SelectionPeopleApp&quot; with &quot;Pagination...</div>
<div class="a" style="left:32.2px;top:535.5px;width:259.9px;height:5.5px;background:#3e4f82;"></div>
<div class="t" style="left:303.37px;top:516.00px;font-size:12.5px;color:#fff;transform:scaleX(0.9313);">Developer PowerShell</div>
<div class="a" style="left:303.9px;top:535.5px;width:114.4px;height:5.5px;background:#3e4f82;"></div>
<div class="t" style="left:429.45px;top:516.00px;font-size:12.5px;color:#fff;transform:scaleX(0.9481);">F# Interactive</div>
<div class="a" style="left:430.0px;top:535.5px;width:71.3px;height:5.5px;background:#3e4f82;"></div>
<div class="t" style="left:512.82px;top:516.00px;font-size:12.5px;color:#fff;transform:scaleX(0.9214);">CodeLens</div>
<div class="a" style="left:513.0px;top:535.5px;width:52.5px;height:5.5px;background:#3e4f82;"></div>
<div class="t" style="left:577.00px;top:516.00px;font-size:12.5px;color:#fff;transform:scaleX(0.9566);">C# Interactive</div>
<div class="a" style="left:577.2px;top:535.5px;width:73.6px;height:5.5px;background:#3e4f82;"></div>
<div class="t" style="left:661.38px;top:516.00px;font-size:12.5px;color:#fff;transform:scaleX(0.9186);">Error List</div>
<div class="a" style="left:661.9px;top:535.5px;width:46.6px;height:5.5px;background:#3e4f82;"></div>
<div class="t" style="left:719.46px;top:516.00px;font-size:12.5px;color:#fff;transform:scaleX(0.9379);">Package Manager Console</div>
<div class="a" style="left:720.0px;top:535.5px;width:141.0px;height:5.5px;background:#3e4f82;"></div>
<div class="t" style="left:871.49px;top:516.00px;font-size:12.5px;color:#fff;transform:scaleX(1.0270);">Output</div>
<div class="a" style="left:871.6px;top:535.5px;width:38.9px;height:5.5px;background:#3e4f82;"></div>
<!-- status bar -->
<div class="a" style="left:0px;top:541px;width:1024px;height:24px;background:#40508d;"></div>
<svg style="left:4.5px;top:545px" width="17" height="16" viewBox="0 0 17 16"><path d="M0.6 0.6H15.8V12.4H10.2L8.2 15.2L6.2 12.4H0.6Z" fill="#4e5c99" stroke="#fff" stroke-width="1.1"/><path d="M3.4 6.6L6.6 9.8L12.9 3.2" fill="none" stroke="#fff" stroke-width="1.2"/></svg>
<div class="t" style="left:28.71px;top:545.00px;font-size:12.5px;color:#fff;transform:scaleX(0.8940);">Ready</div>
<svg style="left:439.5px;top:547px" width="14" height="12" viewBox="0 0 14 12"><path d="M3.5 11.5V1M0.6 3.8L3.5 0.8L6.4 3.8M10.2 0.5V11M7.3 8.2L10.2 11.2L13.1 8.2" fill="none" stroke="#fff" stroke-width="1.2"/></svg>
<div class="t" style="left:459.93px;top:545.00px;font-size:12.5px;color:#fff;transform:scaleX(0.9745);">0 / 0</div>
<svg style="left:489px;top:551px" width="8.5" height="4.5" viewBox="0 0 8.5 4.5"><path d="M0 4.5H8.5L4.25 0Z" fill="#fff"/></svg>
<svg style="left:521px;top:547px" width="13" height="11" viewBox="0 0 13 11"><path d="M0.8 10.4L1.6 7.2L8.8 0.8C9.6 0.2 10.4 0.2 11.2 0.9C12 1.6 12 2.6 11.3 3.3L4 9.6Z M1.6 7.2L4 9.6" fill="none" stroke="#fff" stroke-width="1.1" stroke-linejoin="round"/></svg>
<div class="t" style="left:541.06px;top:545.00px;font-size:12.5px;color:#fff;transform:scaleX(0.9412);">4</div>
<svg style="left:570px;top:546px" width="13" height="15" viewBox="0 0 13 15"><circle cx="3" cy="2.6" r="2" fill="none" stroke="#fff" stroke-width="1.1"/><circle cx="3" cy="12.2" r="2" fill="none" stroke="#fff" stroke-width="1.1"/><circle cx="10.2" cy="4.6" r="2" fill="none" stroke="#fff" stroke-width="1.1"/><path d="M3 4.6V10.2M10.2 6.6C10.2 9 7 9 3.4 10.2" fill="none" stroke="#fff" stroke-width="1.1"/></svg>
<div class="t" style="left:591.01px;top:545.00px;font-size:12.5px;color:#fff;transform:scaleX(0.9841);">dev/shwe/mvux-advanced-people-app</div>
<svg style="left:805px;top:551px" width="8" height="4.5" viewBox="0 0 8 4.5"><path d="M0 4.5H8L4 0Z" fill="#fff"/></svg>
<svg style="left:842px;top:546px" width="15" height="14.5" viewBox="0 0 15 14.5"><path d="M1 0.6H13V3.2H1Z M2.4 3.2V12.4H8 M11.6 3.2V7 M5 5.4V9.6 M8.6 5.4V7.4" fill="none" stroke="#fff" stroke-width="1.1"/><circle cx="11" cy="10.8" r="3.4" fill="#fff"/><path d="M11 13V8.8M9.4 10.3L11 8.7L12.6 10.3" fill="none" stroke="#333" stroke-width="0.9"/></svg>
<div class="t" style="left:862.18px;top:545.00px;font-size:12.5px;color:#fff;transform:scaleX(0.9329);">Uno.Samples</div>
<svg style="left:938.5px;top:551.5px" width="7.6" height="4" viewBox="0 0 7.6 4"><path d="M0 4H7.6L3.8 0Z" fill="#fff"/></svg>
<svg style="left:967.5px;top:544.5px" width="13" height="14" viewBox="0 0 13 14"><path d="M1 10.6C2.4 9.4 2.4 8 2.4 5.6C2.4 2.6 4 0.8 6.2 0.8C8.4 0.8 10 2.6 10 5.6C10 8 10 9.4 11.4 10.6Z" fill="#5a68a3" stroke="#fff" stroke-width="1.1"/><path d="M4.6 11.4C4.8 13 7.6 13 7.8 11.4" fill="none" stroke="#fff" stroke-width="1.1"/></svg>
<div class="a" style="left:975.3px;top:550.3px;width:11.4px;height:11.4px;border-radius:6px;background:#e51400"></div>
<div class="t" style="left:978.2px;top:548.2px;font-size:9.5px;font-weight:bold;color:#fff">2</div>
<svg style="left:1009px;top:551px" width="10" height="10" viewBox="0 0 10 10"><rect x="0.0" y="7.8" width="1.2" height="1.2" fill="#8f98c4"/><rect x="2.6" y="5.2" width="1.2" height="1.2" fill="#8f98c4"/><rect x="2.6" y="7.8" width="1.2" height="1.2" fill="#8f98c4"/><rect x="5.2" y="2.6" width="1.2" height="1.2" fill="#8f98c4"/><rect x="5.2" y="5.2" width="1.2" height="1.2" fill="#8f98c4"/><rect x="5.2" y="7.8" width="1.2" height="1.2" fill="#8f98c4"/><rect x="7.8" y="0.0" width="1.2" height="1.2" fill="#8f98c4"/><rect x="7.8" y="2.6" width="1.2" height="1.2" fill="#8f98c4"/><rect x="7.8" y="5.2" width="1.2" height="1.2" fill="#8f98c4"/><rect x="7.8" y="7.8" width="1.2" height="1.2" fill="#8f98c4"/></svg>
<!-- auto-hide side tabs -->
<div class="a" style="left:1px;top:73.2px;width:6px;height:86.8px;background:#3e4f82;"></div>
<div class="vt" style="left:26.13px;top:73.55px;font-size:12.5px;color:#fff;transform:rotate(90deg) scaleX(0.9000)">Syntax Visualizer</div>
<div class="a" style="left:1px;top:172.2px;width:6px;height:41.1px;background:#3e4f82;"></div>
<div class="vt" style="left:26.13px;top:172.77px;font-size:12.5px;color:#fff;transform:rotate(90deg) scaleX(0.9310)">Toolbox</div>
<div class="a" style="left:1px;top:224.8px;width:6px;height:141.5px;background:#3e4f82;"></div>
<div class="vt" style="left:26.13px;top:225.14px;font-size:12.5px;color:#fff;transform:rotate(90deg) scaleX(0.9119)">SQL Server Object Explorer</div>
<div class="a" style="left:1px;top:377.4px;width:6px;height:66.7px;background:#3e4f82;"></div>
<div class="vt" style="left:26.13px;top:377.97px;font-size:12.5px;color:#fff;transform:rotate(90deg) scaleX(0.9021)">Test Explorer</div>
<div class="a" style="left:1017px;top:73.2px;width:6px;height:67.6px;background:#3e4f82;"></div>
<div class="vt" style="left:1014.73px;top:73.01px;font-size:12.5px;color:#fff;transform:rotate(90deg) scaleX(0.9933)">Notifications</div>
<div class="a" style="left:1017px;top:152.2px;width:6px;height:91.3px;background:#3e4f82;"></div>
<div class="vt" style="left:1014.73px;top:152.52px;font-size:12.5px;color:#fff;transform:rotate(90deg) scaleX(0.9524)">Solution Explorer</div>
<div class="a" style="left:1017px;top:255.8px;width:6px;height:62.7px;background:#3e4f82;"></div>
<div class="vt" style="left:1014.73px;top:256.04px;font-size:12.5px;color:#fff;transform:rotate(90deg) scaleX(0.8964)">Git Changes</div>
<div class="a" style="left:1017px;top:330.2px;width:6px;height:53.7px;background:#3e4f82;"></div>
<div class="vt" style="left:1014.73px;top:330.06px;font-size:12.5px;color:#fff;transform:rotate(90deg) scaleX(0.9420)">Properties</div>
<div class="a" style="left:1017px;top:395.8px;width:6px;height:54.7px;background:#3e4f82;"></div>
<div class="vt" style="left:1014.73px;top:396.05px;font-size:12.5px;color:#fff;transform:rotate(90deg) scaleX(0.8736)">Class View</div>
</div>
</body>
</html>
